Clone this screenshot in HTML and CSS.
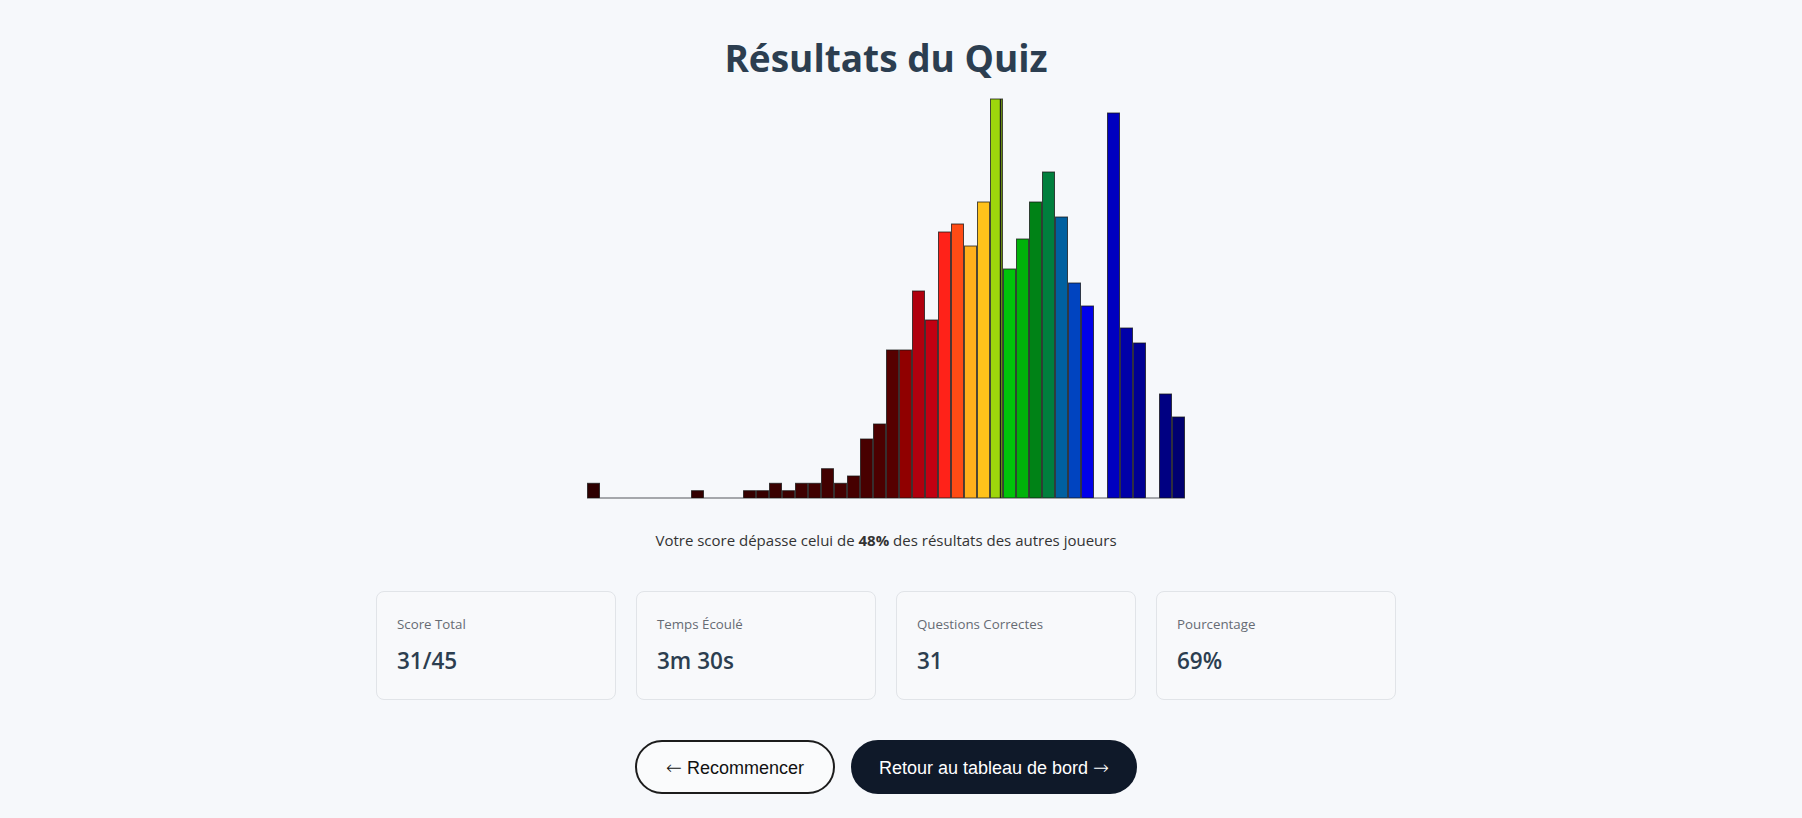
FILE: index.html
```html
<!DOCTYPE html>
<html lang="fr">
<head>
<meta charset="utf-8">
<title>Résultats du Quiz</title>
<link rel="stylesheet" href="styles.css">
</head>
<body>
<main class="page">
  <h1 class="title">Résultats du Quiz</h1>
  <svg class="chart" width="599" height="401" viewBox="0 0 599 401" xmlns="http://www.w3.org/2000/svg">
    <g class="bars">
      <rect x="0.5" y="385.3" width="12" height="14.7" fill="#2e0000"/>
      <line class="zero" x1="13" y1="400" x2="104" y2="400"/>
      <rect x="104.5" y="392.7" width="12" height="7.3" fill="#330000"/>
      <line class="zero" x1="117" y1="400" x2="156" y2="400"/>
      <rect x="156.5" y="392.7" width="12" height="7.3" fill="#360000"/>
      <rect x="169.5" y="392.7" width="12" height="7.3" fill="#380000"/>
      <rect x="182.5" y="385.3" width="12" height="14.7" fill="#3a0000"/>
      <rect x="195.5" y="392.7" width="12" height="7.3" fill="#3c0000"/>
      <rect x="208.5" y="385.3" width="12" height="14.7" fill="#3e0000"/>
      <rect x="221.5" y="385.3" width="12" height="14.7" fill="#400000"/>
      <rect x="234.5" y="370.7" width="12" height="29.3" fill="#420000"/>
      <rect x="247.5" y="385.3" width="12" height="14.7" fill="#440000"/>
      <rect x="260.5" y="378" width="12" height="22" fill="#460000"/>
      <rect x="273.5" y="341" width="12" height="59" fill="#480000"/>
      <rect x="286.5" y="326" width="12" height="74" fill="#4c0000"/>
      <rect x="299.5" y="252" width="12" height="148" fill="#560000"/>
      <rect x="312.5" y="252" width="12" height="148" fill="#900000"/>
      <rect x="325.5" y="193" width="12" height="207" fill="#b0000e"/>
      <rect x="338.5" y="222" width="12" height="178" fill="#c20012"/>
      <rect x="351.5" y="134" width="12" height="266" fill="#ff2219"/>
      <rect x="364.5" y="126" width="12" height="274" fill="#ff4b15"/>
      <rect x="377.5" y="148" width="12" height="252" fill="#ffb01c"/>
      <rect x="390.5" y="104" width="12" height="296" fill="#ffc21b"/>
      <rect x="403.5" y="1" width="12" height="399" fill="#9dd60c"/>
      <line class="marker" x1="413.6" y1="1" x2="413.6" y2="400"/>
      <rect x="416.5" y="171" width="12" height="229" fill="#00c40a"/>
      <rect x="429.5" y="141" width="12" height="259" fill="#00b20a"/>
      <rect x="442.5" y="104" width="12" height="296" fill="#008216"/>
      <rect x="455.5" y="74" width="12" height="326" fill="#007f3d"/>
      <rect x="468.5" y="119" width="12" height="281" fill="#0060a0"/>
      <rect x="481.5" y="185" width="12" height="215" fill="#0044c0"/>
      <rect x="494.5" y="208" width="12" height="192" fill="#0000ea"/>
      <line class="zero" x1="507" y1="400" x2="520" y2="400"/>
      <rect x="520.5" y="15" width="12" height="385" fill="#0000c0"/>
      <rect x="533.5" y="230" width="12" height="170" fill="#0000a8"/>
      <rect x="546.5" y="245" width="12" height="155" fill="#000094"/>
      <line class="zero" x1="559" y1="400" x2="572" y2="400"/>
      <rect x="572.5" y="296" width="12" height="104" fill="#000082"/>
      <rect x="585.5" y="319" width="12" height="81" fill="#000070"/>
    </g>
  </svg>
  <p class="summary">Votre score dépasse celui de <strong>48%</strong> des résultats des autres joueurs</p>
  <section class="stats">
    <div class="card">
      <div class="card-label">Score Total</div>
      <div class="card-value">31/45</div>
    </div>
    <div class="card">
      <div class="card-label">Temps Écoulé</div>
      <div class="card-value">3m 30s</div>
    </div>
    <div class="card">
      <div class="card-label">Questions Correctes</div>
      <div class="card-value">31</div>
    </div>
    <div class="card">
      <div class="card-label">Pourcentage</div>
      <div class="card-value">69%</div>
    </div>
  </section>
  <div class="actions">
    <button class="btn btn-outline" type="button"><span class="arrow">←</span> Recommencer</button>
    <button class="btn btn-dark" type="button">Retour au tableau de bord <span class="arrow">→</span></button>
  </div>
</main>
</body>
</html>
```

FILE: styles.css
```css
html, body {
  margin: 0;
  padding: 0;
}

body {
  background: #f6f8fb;
  font-family: "Open Sans", "Noto Sans", sans-serif;
  color: #333;
}

.page {
  display: flex;
  flex-direction: column;
  align-items: center;
  padding: 32px 30px 0 0;
}

.title {
  margin: 0;
  font-size: 37px;
  font-weight: 700;
  color: #2c3e50;
  line-height: normal;
}

.chart {
  display: block;
  margin-top: 15px;
}

.bars rect {
  stroke: rgba(20, 20, 20, 0.75);
  stroke-width: 1;
}

.bars .zero {
  stroke: #55575c;
  stroke-width: 1;
}

.bars .marker {
  stroke: #1a1a1a;
  stroke-width: 1.6;
}

.summary {
  margin: 31px 0 0;
  font-size: 15px;
  color: #333;
}

.summary strong {
  font-weight: 700;
}

.stats {
  display: grid;
  grid-template-columns: repeat(4, 1fr);
  gap: 20px;
  width: 1020px;
  margin-top: 41px;
}

.card {
  background: #f8f9fb;
  border: 1px solid #e1e4e8;
  border-radius: 8px;
  padding: 23px 20px 23px;
}

.card-label {
  font-size: 13.3px;
  line-height: 18px;
  color: #666b73;
}

.card-value {
  margin-top: 13px;
  font-size: 22.5px;
  line-height: 30px;
  font-weight: 600;
  color: #2c3e50;
}

.actions {
  display: flex;
  gap: 16px;
  margin-top: 40px;
}

.btn {
  height: 54px;
  border-radius: 9999px;
  font-family: "Liberation Sans", Arial, sans-serif;
  font-size: 18px;
  border: 2px solid #1c1c1c;
  cursor: pointer;
}

.arrow {
  font-family: "DejaVu Sans", sans-serif;
  font-weight: 200;
  font-size: 19px;
}

.btn-outline {
  background: #fafbfc;
  color: #111;
  padding: 0 29px;
}

.btn-dark {
  background: #0f1929;
  border-color: #0f1929;
  color: #fff;
  padding: 0 26px;
}
```
